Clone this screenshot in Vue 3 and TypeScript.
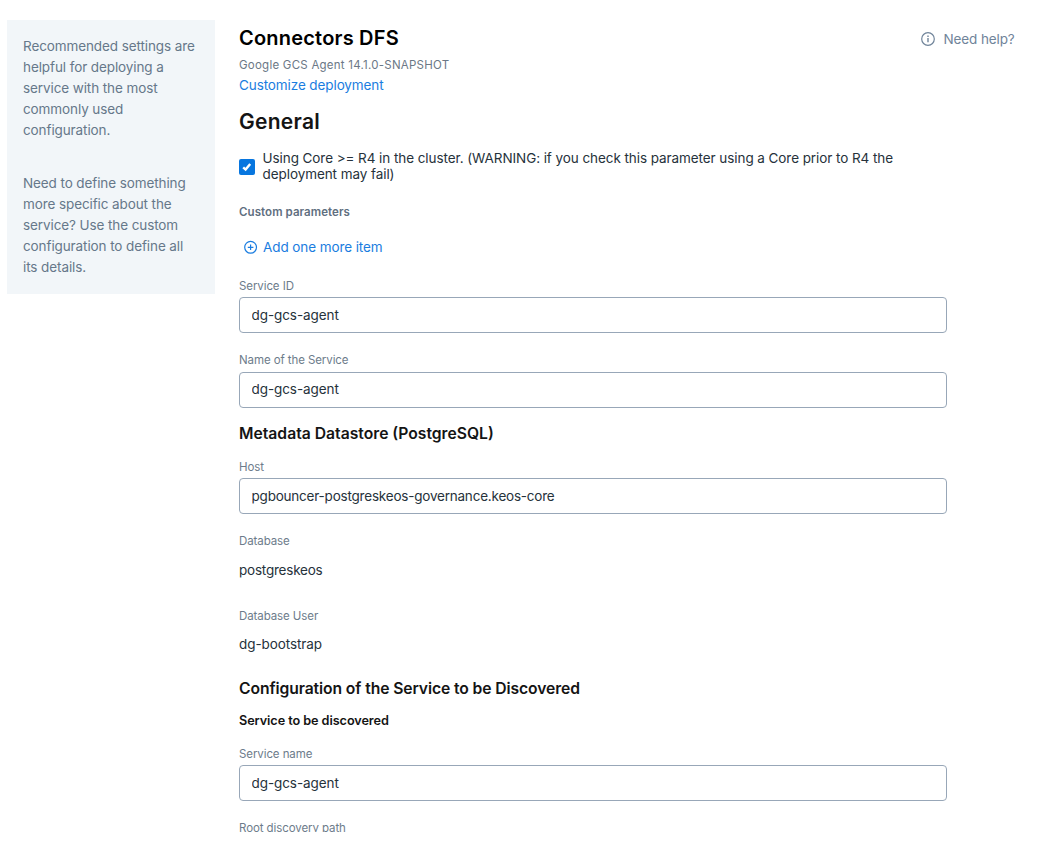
<script setup lang="ts">
import { ref } from 'vue'

const usesCore = ref(true)
const serviceId = ref('dg-gcs-agent')
const serviceLabel = ref('dg-gcs-agent')
const host = ref('pgbouncer-postgreskeos-governance.keos-core')
const discoveredName = ref('dg-gcs-agent')
</script>

<template>
  <div class="page">
    <aside class="hint">
      <p>Recommended settings are helpful for deploying a service with the most commonly used configuration.</p>
      <p>Need to define something more specific about the service? Use the custom configuration to define all its details.</p>
    </aside>

    <main class="content">
      <h1 class="title">Connectors DFS</h1>
      <div class="subtitle">Google GCS Agent 14.1.0-SNAPSHOT</div>
      <a class="link customize">Customize deployment</a>

      <h2 class="heading">General</h2>
      <label class="check">
        <input v-model="usesCore" type="checkbox" class="native" />
        <span class="box" :class="{ on: usesCore }">
          <svg v-if="usesCore" width="16" height="16" viewBox="0 0 16 16">
            <path d="M4.2 8.4 6.6 10.6 11.2 4.9" fill="none" stroke="#fff" stroke-width="2.4" />
          </svg>
        </span>
        <span class="check-text">Using Core &gt;= R4 in the cluster. (WARNING: if you check this parameter using a Core prior to R4 the deployment may fail)</span>
      </label>

      <div class="params">Custom parameters</div>
      <a class="link add">
        <svg width="14" height="14" viewBox="0 0 14 14" fill="none" stroke="currentColor" stroke-width="1.2">
          <circle cx="6.6" cy="7.3" r="5.9" />
          <path d="M6.6 4.5v5.6M3.8 7.3h5.6" />
        </svg>
        <span>Add one more item</span>
      </a>

      <label class="field first">
        <span class="label">Service ID</span>
        <input v-model="serviceId" class="input" type="text" />
      </label>
      <label class="field second">
        <span class="label">Name of the Service</span>
        <input v-model="serviceLabel" class="input" type="text" />
      </label>

      <h3 class="section">Metadata Datastore (PostgreSQL)</h3>
      <label class="field host">
        <span class="label">Host</span>
        <input v-model="host" class="input wide" type="text" />
      </label>
      <div class="readonly">
        <div class="label">Database</div>
        <div class="value db">postgreskeos</div>
      </div>
      <div class="readonly user">
        <div class="label">Database User</div>
        <div class="value">dg-bootstrap</div>
      </div>

      <h3 class="section config">Configuration of the Service to be Discovered</h3>
      <h4 class="subsection">Service to be discovered</h4>
      <label class="field name">
        <span class="label">Service name</span>
        <input v-model="discoveredName" class="input" type="text" />
      </label>
      <div class="label root">Root discovery path</div>
    </main>

    <a class="help">
      <svg width="14" height="14" viewBox="0 0 14 14" fill="none" stroke="currentColor" stroke-width="1.2">
        <circle cx="7" cy="7" r="6.3" />
        <path d="M7 6v4.2M7 3.6v1.3" stroke-width="1.4" />
      </svg>
      <span>Need help?</span>
    </a>
  </div>
</template>

<style>
body { background: #fff; overflow: hidden; }
</style>

<style scoped>
.page {
  box-sizing: border-box;
  display: flex;
  align-items: flex-start;
  height: 832px;
  padding: 20px 0 0 7px;
  overflow: hidden;
  font-family: Inter, "Liberation Sans", sans-serif;
  font-size: 13.5px;
  letter-spacing: -0.08px;
  color: #26323b;
}
h1, h2, h3, h4, p { margin: 0; }
.hint {
  box-sizing: border-box;
  width: 208px;
  height: 274px;
  padding: 16px 16px 0;
  background: #f2f6f9;
  color: #66788a;
  line-height: 21px;
  letter-spacing: -0.1px;
}
.hint p + p { margin-top: 32px; }
.content { width: 708px; margin-left: 24px; flex: none; }
.title {
  margin-top: 6px;
  font-size: 20px;
  font-weight: 600;
  line-height: 24px;
  letter-spacing: 0.2px;
  color: #000;
}
.subtitle {
  margin-top: 7px;
  font-size: 11.5px;
  line-height: 16px;
  letter-spacing: 0.24px;
  color: #6b7886;
}
.link { color: #1a7de0; cursor: pointer; }
.customize { display: block; margin-top: 2px; line-height: 20px; letter-spacing: -0.1px; }
.heading {
  margin-top: 13px;
  font-size: 21px;
  font-weight: 600;
  line-height: 28px;
  letter-spacing: 0.27px;
  color: #141414;
}
.check { display: flex; margin-top: 14px; line-height: 16px; }
.native { position: absolute; opacity: 0; }
.box {
  box-sizing: border-box;
  flex: none;
  width: 16px;
  height: 16px;
  margin: 9px 7.5px 0 0;
  border: 1px solid #98a7b8;
  border-radius: 2px;
}
.box.on { border: 0; background: #0776df; }
.box svg { display: block; }
.check-text { letter-spacing: -0.073px; }
.params {
  margin-top: 22px;
  font-size: 11.5px;
  font-weight: 600;
  line-height: 16px;
  letter-spacing: 0.07px;
  color: #5f6f7f;
}
.add { display: flex; align-items: center; gap: 5px; margin: 17px 0 0 5px; line-height: 20px; letter-spacing: -0.09px; }
.field { display: block; }
.first { margin-top: 21px; }
.second { margin-top: 19px; }
.second .input { margin-top: 4px; padding-bottom: 2px; }
.host { margin-top: 14px; }
.name { margin-top: 15px; }
.label {
  display: block;
  font-size: 11.5px;
  line-height: 16px;
  letter-spacing: -0.09px;
  color: #6d7c8b;
}
.input {
  box-sizing: border-box;
  display: block;
  width: 100%;
  height: 36px;
  margin: 3px 0 0;
  padding: 0 11.5px;
  border: 1px solid #98a7b8;
  border-radius: 4px;
  outline: none;
  background: #fff;
  color: #26323b;
  font: inherit;
  letter-spacing: -0.08px;
}
.input.wide { letter-spacing: -0.21px; }
.section {
  margin-top: 15px;
  font-size: 15.7px;
  font-weight: 600;
  line-height: 22px;
  letter-spacing: 0;
  color: #141414;
}
.readonly { margin-top: 19px; }
.value { margin-top: 10px; line-height: 20px; letter-spacing: -0.08px; }
.value.db { margin-top: 11px; letter-spacing: -0.22px; }
.user { margin-top: 28px; }
.config { margin-top: 24px; letter-spacing: -0.1px; }
.subsection {
  margin-top: 11px;
  font-size: 12.7px;
  font-weight: 600;
  line-height: 20px;
  letter-spacing: -0.08px;
  color: #141414;
}
.root { margin-top: 19px; }
.help {
  display: flex;
  align-items: center;
  gap: 8.5px;
  margin: 9px 0 0 -26px;
  line-height: 20px;
  letter-spacing: -0.12px;
  color: #70849a;
  white-space: nowrap;
  cursor: pointer;
}
</style>
